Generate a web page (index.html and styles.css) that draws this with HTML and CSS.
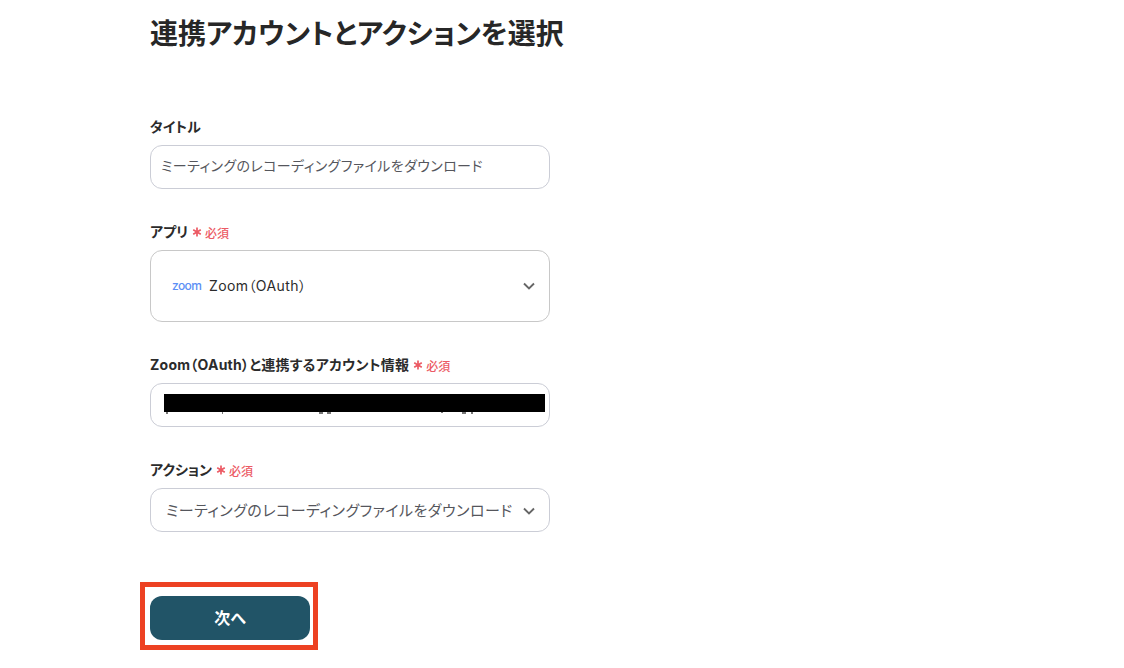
FILE: index.html
```html
<!DOCTYPE html>
<html lang="ja">
<head>
  <meta charset="UTF-8">
  <title>連携アカウントとアクションを選択</title>
  <link rel="stylesheet" href="styles.css">
</head>
<body>

<div class="container">
  <h1 class="page-title">連携アカウントとアクションを選択</h1>

  <div class="field">
    <div class="field-label">タイトル</div>
    <div class="text-box">ミーティングのレコーディングファイルをダウンロード</div>
  </div>

  <div class="field">
    <div class="field-label">アプリ<span class="required"><svg class="required-mark" viewBox="0 0 10 10" width="10" height="10"><path d="M5 .6V9.4M1.2 2.8 8.8 7.2M8.8 2.8 1.2 7.2" stroke="#ec5a64" stroke-width="1.7"/></svg>必須</span></div>
    <div class="app-select">
      <span class="zoom-logo">zoom</span>
      <span class="app-name">Zoom（OAuth）</span>
      <svg class="chevron" viewBox="0 0 12 8" width="12" height="8"><path d="M1 1.5 6 6.5 11 1.5" fill="none" stroke="#666" stroke-width="1.9"/></svg>
    </div>
  </div>

  <div class="field">
    <div class="field-label field-label-long">Zoom（OAuth）と連携するアカウント情報<span class="required"><svg class="required-mark" viewBox="0 0 10 10" width="10" height="10"><path d="M5 .6V9.4M1.2 2.8 8.8 7.2M8.8 2.8 1.2 7.2" stroke="#ec5a64" stroke-width="1.7"/></svg>必須</span></div>
    <div class="text-box account-box">
      <div class="redaction"></div>
      <!-- bits of the covered text that stick out under the black bar -->
      <svg class="redaction-rest" viewBox="0 0 320 2" width="320" height="2">
        <path d="M2 0h2v2H2zM58 0h1v2h-1zM155 0h4v2h-4zM163 0h4v2h-4zM277 0h2v1h-2zM298 0h4v2h-4zM307 0h2v2h-2z" fill="#777"/>
      </svg>
    </div>
  </div>

  <div class="field">
    <div class="field-label">アクション<span class="required"><svg class="required-mark" viewBox="0 0 10 10" width="10" height="10"><path d="M5 .6V9.4M1.2 2.8 8.8 7.2M8.8 2.8 1.2 7.2" stroke="#ec5a64" stroke-width="1.7"/></svg>必須</span></div>
    <div class="action-select">
      <span class="action-text">ミーティングのレコーディングファイルをダウンロード</span>
      <svg class="chevron chevron-low" viewBox="0 0 12 8" width="12" height="8"><path d="M1 1.5 6 6.5 11 1.5" fill="none" stroke="#666" stroke-width="1.9"/></svg>
    </div>
  </div>

  <div class="btn-wrap">
    <button class="btn-next">次へ</button>
    <div class="highlight"></div>
  </div>
</div>

</body>
</html>
```

FILE: styles.css
```css
* {
  margin: 0;
  padding: 0;
  box-sizing: border-box;
}
body {
  font-family: 'Inter', 'Noto Sans CJK JP', sans-serif;
  font-feature-settings: "palt";
  background: #fff;
  color: #2b2b2b;
}

.container {
  width: 400px;
  margin-left: 150px;
  padding-top: 14px;
  padding-bottom: 28px;
}

.page-title {
  font-size: 28px;
  line-height: 40px;
  font-weight: 700;
  white-space: nowrap;
  color: #272727;
  margin-bottom: 64px;
}

.field {
  margin-bottom: 34px;
}

.field-label {
  display: flex;
  align-items: center;
  height: 18px;
  margin-bottom: 9px;
  padding-bottom: 2px;
  font-size: 14px;
  font-weight: 700;
  color: #2b2b2b;
}

.field-label-long {
  letter-spacing: 0.25px;
}

.required {
  display: flex;
  align-items: center;
  margin-left: 4px;
  padding-top: 2px;
  font-size: 12px;
  font-weight: 500;
  letter-spacing: 0;
  color: #ec5a64;
}

.required-mark {
  margin-right: 3px;
}

.text-box {
  height: 44px;
  padding: 0 10px 4px;
  display: flex;
  align-items: center;
  border: 1px solid #cbcdd6;
  border-radius: 12px;
  font-size: 14px;
  letter-spacing: 0.4px;
  color: #55565c;
}

.account-box {
  position: relative;
}

.redaction {
  position: absolute;
  left: 13px;
  top: 10px;
  width: 381px;
  height: 18px;
  background: #000;
}

.redaction-rest {
  position: absolute;
  left: 13px;
  top: 28px;
}

.app-select {
  height: 72px;
  padding: 0 14px 0 21px;
  display: flex;
  align-items: center;
  border: 1px solid #c8c8c8;
  border-radius: 12px;
}

.zoom-logo {
  width: 37px;
  font-family: 'Inter', sans-serif;
  font-size: 12px;
  font-weight: 500;
  line-height: 10px;
  letter-spacing: -0.6px;
  color: #5b8ff5;
}

.app-name {
  padding-bottom: 2px;
  font-size: 14px;
  letter-spacing: 0.4px;
  color: #2b2b2b;
}

.chevron {
  margin-left: auto;
}

.chevron-low {
  margin-top: 2px;
}

.action-select {
  height: 44px;
  padding: 0 14px 0 15px;
  display: flex;
  align-items: center;
  border: 1px solid #cbcdd6;
  border-radius: 12px;
  font-size: 15px;
  letter-spacing: 0.5px;
  color: #55565c;
}

.action-text {
  white-space: nowrap;
  padding-bottom: 2px;
}

.btn-wrap {
  position: relative;
  width: 160px;
  margin-top: 64px;
}

.btn-next {
  display: block;
  width: 160px;
  height: 44px;
  padding-bottom: 2px;
  border: none;
  border-radius: 12px;
  background: #215467;
  color: #fff;
  font-family: inherit;
  font-feature-settings: inherit;
  font-size: 16px;
  font-weight: 700;
}

.highlight {
  position: absolute;
  left: -10px;
  top: -14px;
  width: 178px;
  height: 68px;
  border: 5px solid #ed4122;
}
```
